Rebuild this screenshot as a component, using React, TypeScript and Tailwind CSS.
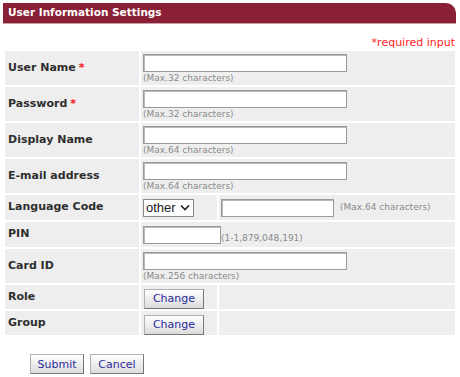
import React from 'react';

const font = { fontFamily: '"DejaVu Sans", Verdana, sans-serif' };

const TextInput = ({ w = 'w-[204px]' }: { w?: string }) => (
  <div className={`${w} h-[18px] bg-white border border-[#9a9a9a] shadow-[inset_1px_1px_0_#b8b8b8]`} />
);

const Hint = ({ children }: { children: React.ReactNode }) => (
  <div className="text-[9px] leading-[10px] text-[#8a8a8a] mt-[1px]">{children}</div>
);

const Btn = ({ label, w }: { label: string; w: string }) => (
  <button
    className={`${w} h-[20px] text-[11px] leading-none text-[#2b2b9c] border border-[#b0b0b0] border-r-[#777] border-b-[#777] bg-gradient-to-b from-white to-[#dcdcdc]`}
  >
    {label}
  </button>
);

const Star = () => <span className="text-[#ee1111] ml-[3px]">*</span>;

const Label = ({ children }: { children: React.ReactNode }) => (
  <td className="bg-[#eeeeee] pl-[3px] text-[11px] font-bold text-[#2f2f2f] align-middle">{children}</td>
);

export default function App() {
  const textRows = [
    { label: 'User Name', req: true, hint: '(Max.32 characters)' },
    { label: 'Password', req: true, hint: '(Max.32 characters)' },
    { label: 'Display Name', req: false, hint: '(Max.64 characters)' },
    { label: 'E-mail address', req: false, hint: '(Max.64 characters)' },
  ];

  return (
    <div className="w-[460px] h-[377px] bg-white overflow-hidden" style={font}>
      <div className="mt-[3px] ml-[3px] mr-[4px] h-[21px] bg-[#8a1f35] rounded-tr-[10px] border-b border-[#c9a0aa] flex items-center pl-[5px]">
        <span className="text-white font-bold text-[10.5px]">User Information Settings</span>
      </div>
      <div className="text-right pr-[5px] text-[11px] text-[#ff2222] mt-[12px] leading-[14px]">*required input</div>

      <table className="ml-[3px] mt-[-1px] border-separate border-spacing-[2px] w-[454px] table-fixed">
        <colgroup>
          <col className="w-[134px]" />
          <col className="w-[76px]" />
          <col />
        </colgroup>
        <tbody>
          {textRows.map((r) => (
            <tr key={r.label} className="h-[34px]">
              <Label>
                {r.label}
                {r.req && <Star />}
              </Label>
              <td colSpan={2} className="bg-[#eeeeee] pl-[2px] pt-[1px] align-middle">
                <TextInput />
                <Hint>{r.hint}</Hint>
              </td>
            </tr>
          ))}
          <tr className="h-[25px]">
            <Label>Language Code</Label>
            <td className="bg-[#eeeeee] pl-[2px] align-middle">
              <div className="w-[51px] h-[18px] bg-white border border-[#8a8a8a] flex items-center pl-[2px] gap-[4px] text-[13px] text-[#222]" style={{ fontFamily: '"Liberation Sans", Arial, sans-serif' }}>
                <span>other</span>
                <svg width="10" height="7" viewBox="0 0 10 7" fill="none" stroke="#222" strokeWidth="1.6">
                  <path d="M1 1.5 L5 5.5 L9 1.5" />
                </svg>
              </div>
            </td>
            <td className="bg-[#eeeeee] pl-[2px] align-middle">
              <div className="flex items-center gap-[6px]">
                <TextInput w="w-[113px]" />
                <span className="text-[9px] text-[#8a8a8a]">(Max.64 characters)</span>
              </div>
            </td>
          </tr>
          <tr className="h-[25px]">
            <Label>PIN</Label>
            <td colSpan={2} className="bg-[#eeeeee] pl-[2px] align-middle">
              <div className="flex items-end">
                <TextInput w="w-[78px]" />
                <span className="text-[9px] text-[#8a8a8a] leading-[11px]">(1-1,879,048,191)</span>
              </div>
            </td>
          </tr>
          <tr className="h-[34px]">
            <Label>Card ID</Label>
            <td colSpan={2} className="bg-[#eeeeee] pl-[2px] pt-[1px] align-middle">
              <TextInput />
              <Hint>(Max.256 characters)</Hint>
            </td>
          </tr>
          {['Role', 'Group'].map((l) => (
            <tr key={l} className="h-[24px]">
              <Label>{l}</Label>
              <td className="bg-[#eeeeee] pl-[3px] align-middle">
                <Btn label="Change" w="w-[60px]" />
              </td>
              <td className="bg-[#eeeeee]" />
            </tr>
          ))}
        </tbody>
      </table>

      <div className="flex gap-[6px] ml-[30px] mt-[17px]">
        <Btn label="Submit" w="w-[54px]" />
        <Btn label="Cancel" w="w-[54px]" />
      </div>
    </div>
  );
}
